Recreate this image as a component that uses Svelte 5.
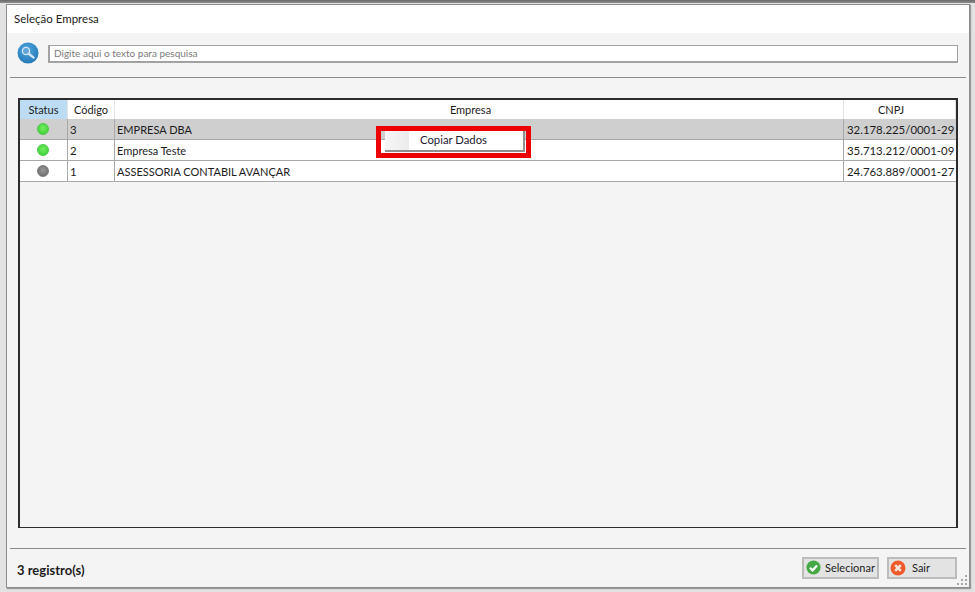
<script>
  const rows = [
    { on: true, code: "3", name: "EMPRESA DBA", cnpj: "32.178.225/0001-29", selected: true },
    { on: true, code: "2", name: "Empresa Teste", cnpj: "35.713.212/0001-09" },
    { on: false, code: "1", name: "ASSESSORIA CONTABIL AVANÇAR", cnpj: "24.763.889/0001-27" }
  ];
</script>

<div class="desk">
  <div class="win">
    <div class="title">Seleção Empresa</div>

    <div class="search">
      <svg class="lens" width="22" height="22" viewBox="0 0 22 22">
        <defs>
          <radialGradient id="blue" cx="0.45" cy="0.35" r="0.75">
            <stop offset="0" stop-color="#4fa6dc" />
            <stop offset="1" stop-color="#1f74b4" />
          </radialGradient>
        </defs>
        <circle cx="11" cy="11" r="10.5" fill="url(#blue)" />
        <circle cx="9" cy="9" r="3.6" fill="#5ea6d8" stroke="#cfe5f5" stroke-width="1.4" />
        <path d="M11.8 11.8 L16.6 15.6" stroke="#cfe5f5" stroke-width="2.4" stroke-linecap="round" />
      </svg>
      <div class="input">Digite aqui o texto para pesquisa</div>
    </div>
    <div class="rule"></div>

    <div class="table">
      <div class="row head">
        <div class="cell status active">Status</div>
        <div class="cell center">Código</div>
        <div class="cell center off">Empresa</div>
        <div class="cell center off">CNPJ</div>
      </div>
      {#each rows as r}
        <div class="row" class:selected={r.selected}>
          <div class="cell status"><span class="dot" class:on={r.on}></span></div>
          <div class="cell code">{r.code}</div>
          <div class="cell">{r.name}</div>
          <div class="cell cnpj">{r.cnpj}</div>
        </div>
      {/each}
    </div>

    <div class="rule bottom"></div>
    <div class="footer">
      <strong>3 registro(s)</strong>
      <div class="buttons">
        <button class="sel">
          <svg width="15" height="15" viewBox="0 0 16 16">
            <circle cx="8" cy="8" r="7.5" fill="#45a845" />
            <path d="M4.2 8.2 L7 11 L11.8 5.8" fill="none" stroke="#fff" stroke-width="2.4" />
          </svg>
          Selecionar
        </button>
        <button class="exit">
          <svg width="16" height="16" viewBox="0 0 16 16">
            <circle cx="8" cy="8" r="7.5" fill="#ee5a2c" />
            <path d="M5.2 5.2 L10.8 10.8 M10.8 5.2 L5.2 10.8" fill="none" stroke="#fde4da" stroke-width="2.6" />
          </svg>
          Sair
        </button>
      </div>
    </div>
    <svg class="grip" width="11" height="11" viewBox="0 0 11 11" fill="#a8a8a8">
      <rect x="8" y="0" width="2" height="2" />
      <rect x="4" y="4" width="2" height="2" />
      <rect x="8" y="4" width="2" height="2" />
      <rect x="0" y="8" width="2" height="2" />
      <rect x="4" y="8" width="2" height="2" />
      <rect x="8" y="8" width="2" height="2" />
    </svg>

    <div class="marker">
      <div class="menu">
        <span class="gutter"></span>
        <span class="item">Copiar Dados</span>
      </div>
    </div>
  </div>
</div>

<style>
  :global(body) {
    margin: 0;
    font-family: Lato, "Liberation Sans", sans-serif;
    font-size: 11px;
    color: #1c1c1c;
  }
  .desk {
    width: 975px;
    height: 592px;
    box-sizing: border-box;
    padding: 4px 5px 4px 6px;
    background: linear-gradient(#6a6a6a 0, #8c8c8c 3px, #e2e2e2 3px);
    overflow: hidden;
  }
  .win {
    position: relative;
    height: 100%;
    box-sizing: border-box;
    display: flex;
    flex-direction: column;
    background: #f4f4f4;
    border: 1px solid #8e8e8e;
    box-shadow: 1px 1px 1px #999;
  }
  .title {
    height: 28px;
    flex: none;
    background: #fff;
    padding-left: 7px;
    font-size: 11.5px;
    line-height: 28px;
    color: #222;
  }
  .search {
    display: flex;
    align-items: center;
    height: 40px;
    flex: none;
    padding: 0 11px 0 10px;
    gap: 9px;
  }
  .lens {
    flex: none;
  }
  .input {
    flex: 1;
    height: 15px;
    margin-top: 2px;
    padding-left: 4px;
    border: 2px solid #a2a2a2;
    border-width: 1px 1px 2px 2px;
    background: #fff;
    color: #7a7a7a;
    font-size: 10px;
    line-height: 15px;
  }
  .rule {
    height: 1px;
    flex: none;
    margin: 4px 3px 0 3px;
    background: #8a8a8a;
  }
  .table {
    flex: 1;
    margin: 20px 11px 0 11px;
    border: 2px solid #2c2c2c;
    border-bottom-width: 1px;
    background: #f4f4f4;
  }
  .row {
    display: grid;
    grid-template-columns: 48px 47px 729px 1fr;
    height: 21px;
    background: #fff;
    border-bottom: 1px solid #a8a8a8;
    box-sizing: border-box;
  }
  .row.head {
    height: 19px;
    border-bottom: 0;
  }
  .row.selected {
    background: #cfcfcf;
  }
  .cell {
    border-right: 1px solid #a8a8a8;
    padding-left: 2px;
    line-height: 21px;
    white-space: nowrap;
    overflow: hidden;
  }
  .cell:last-child {
    border-right: 0;
  }
  .head .cell {
    border-right: 1px solid #e4e4e4;
    line-height: 19px;
    padding-left: 0;
  }
  .head .off {
    padding-right: 17px;
  }
  .center,
  .status {
    text-align: center;
  }
  .status {
    display: flex;
    align-items: center;
    justify-content: center;
    padding-left: 0;
  }
  .head .status.active {
    background: #bcdcf4;
  }
  .code,
  .cnpj {
    font-size: 11.4px;
  }
  .cnpj {
    padding-left: 3px;
  }
  .dot {
    width: 12px;
    height: 12px;
    border-radius: 50%;
    margin-right: 1px;
    background: radial-gradient(circle at 50% 40%, #999, #6c6c6c 80%);
    border: 1px solid #7c7c7c;
    box-sizing: border-box;
  }
  .dot.on {
    background: radial-gradient(circle at 50% 40%, #74ee5e, #3fd23c 80%);
    border-color: #4cc948;
  }
  .rule.bottom {
    margin-top: 20px;
  }
  .footer {
    display: flex;
    align-items: center;
    justify-content: space-between;
    height: 38px;
    flex: none;
    padding: 0 12px 0 10px;
  }
  .footer strong {
    font-weight: 700;
    font-size: 13px;
    padding-top: 3px;
  }
  .buttons {
    display: flex;
    gap: 8px;
    padding-bottom: 1px;
  }
  button {
    display: flex;
    align-items: center;
    height: 22px;
    box-sizing: border-box;
    border: 2px solid #bcbcbc;
    background: #e3e3e3;
    font: inherit;
    color: inherit;
  }
  button svg {
    flex: none;
  }
  .sel {
    width: 77px;
    padding: 0 0 0 2px;
    gap: 4px;
  }
  .exit {
    width: 70px;
    padding: 0 0 0 1px;
    gap: 6px;
  }
  .grip {
    position: absolute;
    right: 1px;
    bottom: 1px;
  }
  .marker {
    position: absolute;
    left: 369px;
    top: 121px;
    width: 155px;
    height: 32px;
    box-sizing: border-box;
    border: 5px solid #ee0000;
  }
  .menu {
    display: flex;
    width: 140px;
    height: 21px;
    margin-left: 4px;
    background: #fff;
    border-right: 2px solid #8f8f8f;
    border-bottom: 2px solid #8f8f8f;
    box-sizing: border-box;
  }
  .gutter {
    width: 24px;
    background: linear-gradient(90deg, #f6f6f6, #ececec);
  }
  .item {
    margin-left: 11px;
    font-size: 11.3px;
    line-height: 17px;
    color: #1c2030;
  }
</style>
